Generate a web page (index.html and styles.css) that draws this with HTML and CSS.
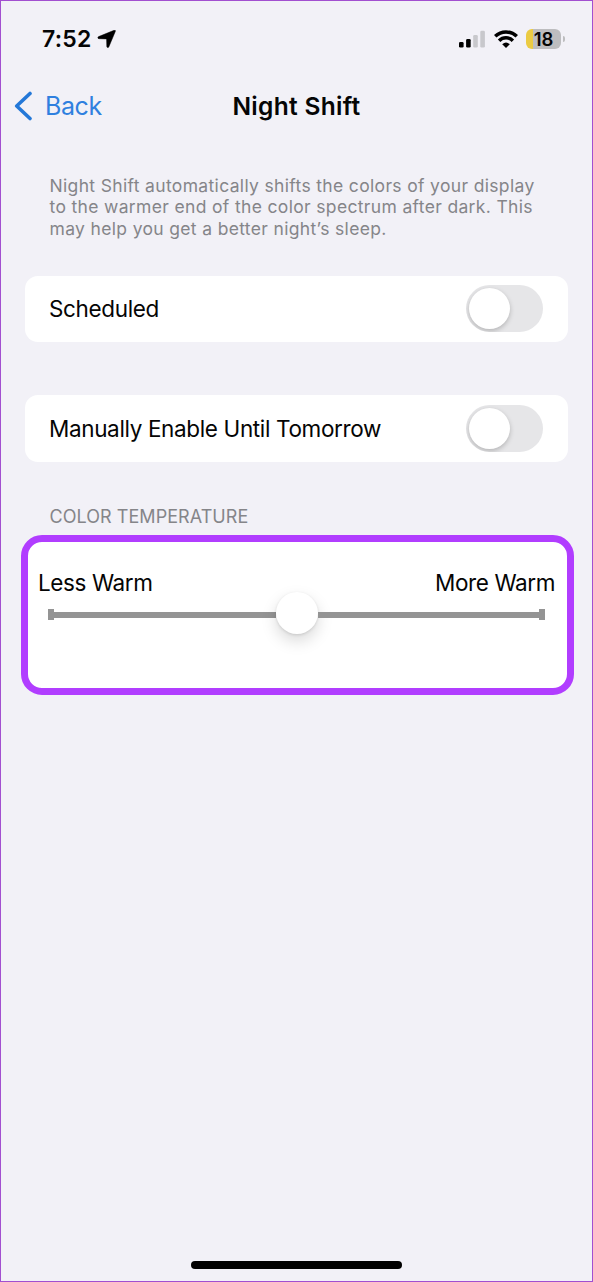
FILE: index.html
```html
<!DOCTYPE html>
<html lang="en">
<head>
<meta charset="utf-8">
<title>Night Shift</title>
<link rel="stylesheet" href="styles.css">
</head>
<body>
<main class="screen">
  <div class="status">
    <div class="status-left">
      <span class="time">7:52</span>
      <svg class="location" width="19" height="18" viewBox="0 0 18 18"><path d="M16.6.3C17.7-.1 18.2.4 17.8 1.4L11.4 16.7C10.9 18 9.4 17.8 9.3 16.4L9.1 9.4Q9.1 8.9 8.6 8.9L1.6 8.7C.1 8.6-.1 7.1 1.2 6.6Z" stroke="#050505" stroke-width=".5"/></svg>
    </div>
    <div class="status-right">
      <svg class="signal" width="26" height="18" viewBox="0 0 26 18"><rect x="0" y="12" width="4.6" height="5.5" rx="1.3"/><rect x="7.1" y="9" width="4.6" height="8.5" rx="1.3"/><g fill="#c8c8cc"><rect x="14.2" y="5" width="4.6" height="12.5" rx="1.3"/><rect x="21.3" y=".8" width="4.6" height="16.7" rx="1.3"/></g></svg>
      <svg class="wifi" width="24" height="18" viewBox="0 0 24 18"><g fill="none" stroke="#000" stroke-width="3.5"><path d="M1.2 6.3A15.6 15.6 0 0 1 22.8 6.3"/><path d="M5.1 10.7A9.8 9.8 0 0 1 18.9 10.7"/></g><path d="M12 18L8.2 14.2Q12 10.9 15.8 14.2Z"/></svg>
      <div class="battery"><div class="battery-body">18</div><div class="battery-tip"></div></div>
    </div>
  </div>
  <header class="nav">
    <div class="back">
      <svg width="18" height="30" viewBox="0 0 18 30"><path d="M16 2.5L2.7 15L16 27.5" fill="none" stroke="#2478d8" stroke-width="3.6" stroke-linecap="round" stroke-linejoin="round"/></svg>
      <span class="back-label">Back</span>
    </div>
    <h1 class="title">Night Shift</h1>
  </header>
  <p class="note">Night Shift automatically shifts the colors of your display<br>to the warmer end of the color spectrum after dark. This<br>may help you get a better night’s sleep.</p>
  <section class="row"><span class="row-label">Scheduled</span><span class="toggle"><span class="knob"></span></span></section>
  <section class="row row-manual"><span class="row-label">Manually Enable Until Tomorrow</span><span class="toggle"><span class="knob"></span></span></section>
  <h2 class="caption">COLOR TEMPERATURE</h2>
  <section class="temperature">
    <div class="ends"><span>Less Warm</span><span>More Warm</span></div>
    <div class="slider"><span class="tick"></span><span class="track"></span><span class="thumb"></span><span class="track"></span><span class="tick"></span></div>
  </section>
  <div class="home"></div>
</main>
</body>
</html>
```
FILE: styles.css
```css
* { box-sizing: border-box; }
body { margin: 0; font-family: Inter, "Liberation Sans", sans-serif; color: #050505; }
.screen {
  display: flex; flex-direction: column;
  width: 593px; height: 1282px;
  border: 1px solid #a24fd0;
  background: #f2f1f7;
}
.status {
  display: flex; justify-content: space-between; align-items: center;
  height: 42px; margin-top: 17px; padding: 0 28px 0 41px;
}
.status-left, .status-right { display: flex; align-items: center; }
.status-left { gap: 6px; }
.time { font-size: 23px; font-weight: 600; letter-spacing: 0.2px; line-height: 42px; }
.signal { margin-right: 9px; }
.wifi { margin-right: 8px; }
.battery { display: flex; align-items: center; gap: 2px; margin-right: -1px; }
.battery-body {
  width: 35px; height: 20px; border-radius: 6px;
  background: linear-gradient(90deg, #ebcb43 7px, #bdbdbf 7px);
  font-size: 18.5px; font-weight: 600; line-height: 20px; text-align: center;
}
.battery-tip { width: 2px; height: 6px; border-radius: 0 2px 2px 0; background: #bdbdbf; }
.nav {
  display: grid; grid-template-columns: 1fr auto 1fr; align-items: center;
  height: 50px; margin-top: 21px; padding: 0 13px;
}
.back { display: flex; align-items: center; gap: 13px; }
.back-label { font-size: 25px; line-height: 50px; letter-spacing: -0.4px; color: #2f80df; }
.title { margin: 0; font-size: 24.5px; font-weight: 600; line-height: 50px; letter-spacing: 0.3px; white-space: nowrap; }
.note {
  margin: 44px 0 0 48.5px; font-size: 17.5px; line-height: 21.3px;
  color: #858589; white-space: nowrap; letter-spacing: 0.34px;
}
.row {
  display: flex; justify-content: space-between; align-items: center;
  height: 66px; margin: 37px 24px 0; padding: 0 25px 0 24px;
  border-radius: 13px; background: #fff;
}
.row-manual { height: 67px; margin-top: 53px; }
.row-label { font-size: 22.5px; letter-spacing: -0.36px; white-space: nowrap; }
.toggle { display: flex; align-items: center; width: 77px; height: 47px; padding: 0 3px; border-radius: 24px; background: #e6e6e8; overflow: hidden; }
.knob { width: 41px; height: 41px; border-radius: 50%; background: #fff; box-shadow: 0 2px 5px rgba(0,0,0,.22); }
.caption { margin: 44px 0 0 48.5px; font-size: 18px; font-weight: 400; line-height: 22px; color: #858589; white-space: nowrap; letter-spacing: .05px; }
.temperature {
  width: 553px; height: 160px; margin: 7px 0 0 20px; padding: 28px 12px 0 10px;
  border: 7px solid #b13dff; border-radius: 21px; background: #fff;
}
.ends { display: flex; justify-content: space-between; font-size: 22.5px; line-height: 26px; letter-spacing: -0.4px; white-space: nowrap; }
.slider { display: flex; align-items: center; height: 20px; margin: 9px 10px 0; }
.tick { width: 6px; height: 11px; background: #949494; }
.track { flex: 1; height: 6px; background: #949494; }
.thumb { width: 42px; height: 42px; margin-top: -4px; border-radius: 50%; background: #fff; box-shadow: 0 7px 16px rgba(0,0,0,.15), 0 1px 3px rgba(0,0,0,.12); }
.home { width: 211px; height: 8px; margin: auto 0 12px 190px; border-radius: 4px; background: #000; }
```
